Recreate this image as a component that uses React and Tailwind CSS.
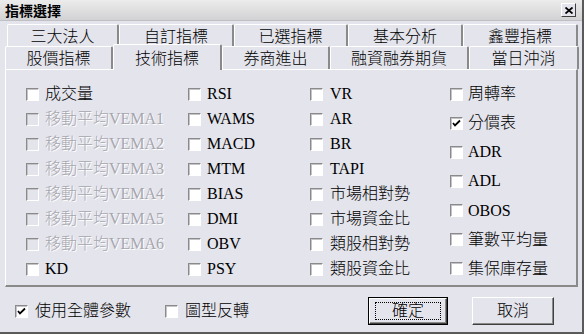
import React from 'react';

// ─── data ────────────────────────────────────────────────────────
const ROW1 = [
  { label: '三大法人', w: 112 },
  { label: '自訂指標', w: 115 },
  { label: '已選指標', w: 114 },
  { label: '基本分析', w: 115 },
  { label: '鑫豐指標', w: 115 },
];
const ROW2 = [
  { label: '股價指標', w: 108 },
  { label: '技術指標', w: 109, active: true },
  { label: '券商進出', w: 108 },
  { label: '融資融券期貨', w: 139 },
  { label: '當日沖消', w: 110 },
];

const COL1 = [
  { label: '成交量' },
  { label: '移動平均VEMA1', disabled: true },
  { label: '移動平均VEMA2', disabled: true },
  { label: '移動平均VEMA3', disabled: true },
  { label: '移動平均VEMA4', disabled: true },
  { label: '移動平均VEMA5', disabled: true },
  { label: '移動平均VEMA6', disabled: true },
  { label: 'KD' },
];
const COL2 = ['RSI', 'WAMS', 'MACD', 'MTM', 'BIAS', 'DMI', 'OBV', 'PSY'].map(label => ({ label }));
const COL3 = ['VR', 'AR', 'BR', 'TAPI', '市場相對勢', '市場資金比', '類股相對勢', '類股資金比'].map(label => ({ label }));
const COL4 = [
  { label: '周轉率' },
  { label: '分價表', checked: true },
  { label: 'ADR' },
  { label: 'ADL' },
  { label: 'OBOS' },
  { label: '筆數平均量' },
  { label: '集保庫存量' },
];

const FONT = 'font-["Liberation_Serif","Noto_Sans_CJK_TC",serif] font-light';

// ─── Checkbox ────────────────────────────────────────────────────
function Box({ checked, disabled }) {
  return (
    <span className={`w-[13px] h-[13px] shrink-0 flex items-center justify-center border border-t-[#8a8a8a] border-l-[#8a8a8a] border-r-white border-b-white shadow-[inset_1px_1px_0_#c4c4c8] ${disabled ? 'bg-[#e4e4ec]' : 'bg-white'}`}>
      {checked && (
        <svg width="9" height="9" viewBox="0 0 9 9">
          <path d="M1 4 L3 6.5 L8 1.5" stroke="#000" strokeWidth="1.8" fill="none" />
        </svg>
      )}
    </span>
  );
}

function Check({ label, checked, disabled, gap = 'ml-[6px]' }) {
  return (
    <div className="flex items-center h-[20px] whitespace-nowrap">
      <Box checked={checked} disabled={disabled} />
      <span className={`${gap} text-[16px] leading-none ${disabled ? 'text-[#a6a6ae] [text-shadow:1px_1px_0_#fff]' : 'text-black'}`}>{label}</span>
    </div>
  );
}

function Tab({ label, w, active }) {
  if (active) {
    return (
      <div className="relative z-10 -mt-[2px] h-[26px] bg-[#e4e4ec] border-t border-l border-white border-r-2 border-r-[#8a8a8a] rounded-t-[2px] flex items-start justify-center pt-[2px] text-[16px]"
        style={{ width: w }}>{label}</div>
    );
  }
  return (
    <div className="h-full bg-[#e4e4ec] border-t border-l border-white border-r-2 border-r-[#8a8a8a] rounded-t-[2px] flex items-center justify-center pt-[2px] text-[16px]"
      style={{ width: w }}>{label}</div>
  );
}

function Button({ children, primary }) {
  return (
    <button className={`h-[28px] flex items-center justify-center text-[16px] bg-[#e4e4ec] ${primary ? 'w-[80px] border border-black' : 'w-[82px]'}`}>
      <span className="w-full h-full flex items-center justify-center border-t border-l border-white border-r border-b border-r-[#404040] border-b-[#404040] shadow-[inset_-1px_-1px_0_#8a8a8a]">
        {primary
          ? <span className="flex items-center justify-center w-[66px] h-[18px] border border-dotted border-black">{children}</span>
          : children}
      </span>
    </button>
  );
}

// ─── App ─────────────────────────────────────────────────────────
export default function App() {
  return (
    <div className={`w-[584px] h-[334px] bg-[#e4e4ec] flex flex-col border-r-2 border-b-2 border-r-[#5a5a5a] border-b-[#5a5a5a] text-black ${FONT}`}>
      {/* title bar */}
      <div className="h-[21px] shrink-0 flex items-center justify-between pl-[5px] pr-[6px] bg-gradient-to-b from-[#ececec] to-[#d2d2d4] border-b border-[#c0c0c4]">
        <span className="font-['Noto_Sans_CJK_TC',sans-serif] font-bold text-[14px] leading-none">指標選擇</span>
        <span className="w-[15px] h-[14px] flex items-center justify-center bg-[#e4e4ec] border-t border-l border-white border-r border-b border-r-[#404040] border-b-[#404040]">
          <svg width="8" height="7" viewBox="0 0 8 7">
            <path d="M0.5 0.5 L7.5 6.5 M7.5 0.5 L0.5 6.5" stroke="#000" strokeWidth="1.8" />
          </svg>
        </span>
      </div>

      {/* tabs */}
      <div className="pt-[3px] pl-[7px] flex h-[25px]">
        {ROW1.map(t => <Tab key={t.label} {...t} />)}
      </div>
      <div className="pl-[5px] flex items-start h-[23px]">
        {ROW2.map(t => <Tab key={t.label} {...t} />)}
      </div>

      {/* panel */}
      <div className="mx-[5px] mr-[4px] h-[218px] border-t border-l border-white border-r-2 border-b-2 border-r-[#8a8a8a] border-b-[#8a8a8a] pt-[14px] pl-[20px] grid grid-cols-[162px_122px_140px_1fr]">
        <div className="h-[195px] flex flex-col justify-between">
          {COL1.map(c => <Check key={c.label} {...c} />)}
        </div>
        <div className="h-[195px] flex flex-col justify-between">
          {COL2.map(c => <Check key={c.label} {...c} />)}
        </div>
        <div className="h-[195px] flex flex-col justify-between">
          {COL3.map(c => <Check key={c.label} {...c} gap="ml-[7px]" />)}
        </div>
        <div className="h-[195px] flex flex-col justify-between">
          {COL4.map(c => <Check key={c.label} {...c} gap="ml-[5px]" />)}
        </div>
      </div>

      {/* footer */}
      <div className="flex-1 flex items-center pl-[15px] pt-[3px]">
        <div className="w-[150px]"><Check label="使用全體參數" checked gap="ml-[7px]" /></div>
        <div className="w-[203px]"><Check label="圖型反轉" gap="ml-[7px]" /></div>
        <Button primary>確定</Button>
        <div className="w-[24px]" />
        <Button>取消</Button>
      </div>
    </div>
  );
}
